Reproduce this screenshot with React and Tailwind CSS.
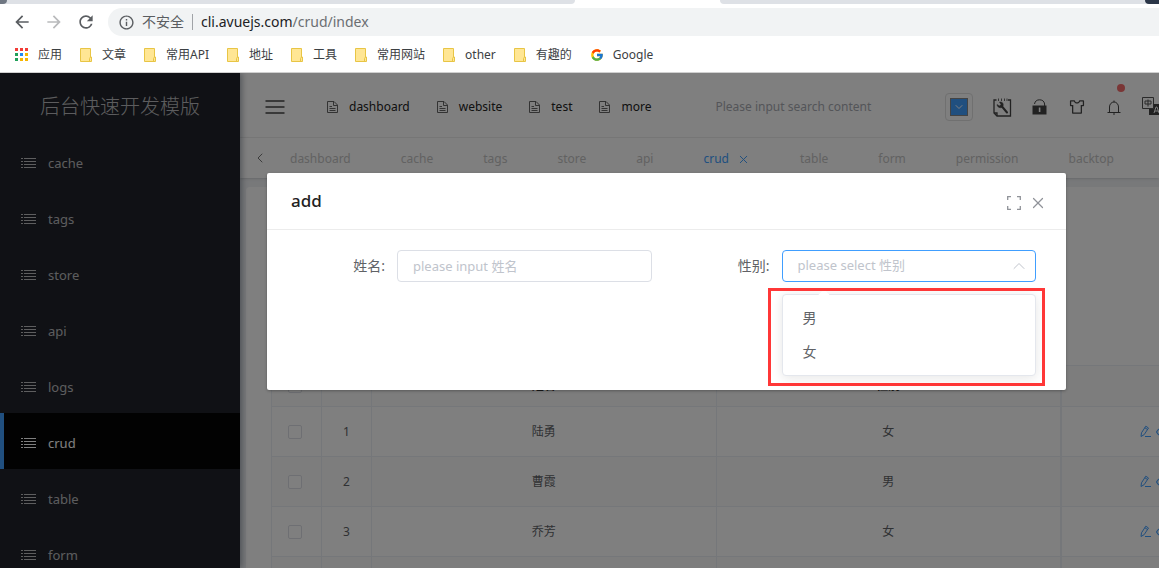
import React from 'react';
import { MdArrowBack, MdArrowForward, MdRefresh, MdInfoOutline } from 'react-icons/md';
import { FcGoogle } from 'react-icons/fc';
import { AiOutlineSkin } from 'react-icons/ai';
import { ChevronLeft, ChevronUp, X } from 'lucide-react';

const bookmarks = ['文章', '常用API', '地址', '工具', '常用网站', 'other', '有趣的'];
const menus = ['cache', 'tags', 'store', 'api', 'logs', 'crud', 'table', 'form'];
const topMenus = ['dashboard', 'website', 'test', 'more'];
const tags = ['dashboard', 'cache', 'tags', 'store', 'api', 'crud', 'table', 'form', 'permission', 'backtop'];
const rows = [
  { id: 1, name: '陆勇', sex: '女' },
  { id: 2, name: '曹霞', sex: '男' },
  { id: 3, name: '乔芳', sex: '女' },
];
const appDots = ['#f23c36', '#f23c36', '#f23c36', '#20a05a', '#2189f5', '#f7b500', '#20a05a', '#f7b500', '#f7b500'];

/* ---------- icons ---------- */

function AppsIcon() {
  return (
    <svg width="14" height="14" viewBox="0 0 14 14" className="shrink-0">
      {appDots.map((fill, i) => (
        <rect key={i} x={(i % 3) * 5} y={Math.floor(i / 3) * 5} width="3" height="3" fill={fill} />
      ))}
    </svg>
  );
}

function FolderIcon() {
  return (
    <svg width="13" height="14" viewBox="0 0 13 14" className="shrink-0">
      <path d="M.5.5h10v8.500h1v4.500H.5z" fill="#ffe694" stroke="#e8c545" />
      <path d="M9.500 13.500v-3l1-1.500" fill="none" stroke="#e8c545" />
    </svg>
  );
}

function ListIcon() {
  return (
    <svg width="16" height="11" viewBox="0 0 16 11" fill="none" stroke="currentColor" className="shrink-0">
      <path d="M0 .5h2M0 3.500h2M0 6.500h2M0 9.500h2M3 .5h12M3 3.500h12M3 6.500h12M3 9.500h12" />
    </svg>
  );
}

function HamburgerIcon() {
  return (
    <svg width="20" height="14" viewBox="0 0 20 14" stroke="#444" strokeWidth="1.600">
      <path d="M.5 1h19M.5 7h19M.5 13h19" />
    </svg>
  );
}

function DocIcon() {
  return (
    <svg width="11" height="13" viewBox="0 0 11 13" fill="none" stroke="#666" className="shrink-0">
      <path d="M.5 .5h6.500l3.500 3.500v7.500H.5zM6.500 .5v4h4M2.500 5.500h2.500M2.500 7.500h6M2.500 9.500h6" />
    </svg>
  );
}

function ToolIcon() {
  return (
    <svg width="19" height="19" viewBox="0 0 19 19" fill="none" stroke="#444" strokeWidth="1.300">
      <path d="M3.500 2H1v13l3 3h13.500V2H15" />
      <path d="M5.500 .5v2.500M8.500 .5v2.500M11.500 .5v2.500M14 .5v2.500" strokeWidth=".8" />
      <path d="M9 8.500l5 6" strokeWidth="2" strokeLinecap="round" />
      <path d="M4 6.500l2.500 1.500 1.500-1.500-1.500-2.500c2.500-.5 4.200 1.200 3.700 3.500s-2.700 2.600-4.200 1.900-2-1.900-2-2.900z" fill="#444" strokeWidth=".5" />
      <path d="M1 15h3v3" />
    </svg>
  );
}

function LockIcon() {
  return (
    <svg width="15" height="16" viewBox="0 0 15 16">
      <path d="M2.500 5C3 2 5 .8 7.500 .8S12.300 2 12.600 5v2" fill="none" stroke="#444" />
      <path d="M.5 6.500h14v9H.5z" fill="#444" />
      <path d="M6.800 8.500h1.600v4.500H6.800z" fill="#fff" />
    </svg>
  );
}

function BellIcon() {
  return (
    <svg width="14" height="15" viewBox="0 0 14 15" fill="none" stroke="#444" strokeWidth="1">
      <path d="M.5 12.500h13M2.500 12.500V7a4.500 5 0 0 1 9 0v5.500M7 .5V2M6 14h2" />
    </svg>
  );
}

function LangIcon() {
  return (
    <svg width="24" height="20" viewBox="0 0 24 20" className="shrink-0">
      <path d="M7 7h16v11H7z" fill="#444" />
      <path d="M.5 .5h11v11H.5z" fill="#fff" stroke="#555" />
      <path d="M3 4h6v3H3zM6 2.500v7" fill="none" stroke="#555" />
      <path d="M12 16l2-6h1l2 6M13 14h3" fill="none" stroke="#fff" />
    </svg>
  );
}

function EditIcon() {
  return (
    <svg width="12" height="13" viewBox="0 0 12 13" fill="none" stroke="#409eff" className="shrink-0">
      <path d="M1 11.500l.5-3.700L5.800 1.200l2.700 1.800-4.300 6.600zM4.800 2.700l2.700 1.800M5 11.500h6" />
    </svg>
  );
}

function EyeIcon() {
  return (
    <svg width="12" height="10" viewBox="0 0 12 10" fill="none" stroke="#409eff" strokeWidth="1.200" className="shrink-0">
      <path d="M.6 5c2.500-5 8.300-5 10.800 0-2.500 5-8.300 5-10.800 0z" />
      <circle cx="6" cy="5" r="1.500" />
    </svg>
  );
}

function FullscreenIcon() {
  return (
    <svg width="14" height="14" viewBox="0 0 14 14" fill="none" stroke="currentColor" strokeWidth="1.300">
      <path d="M.7 4V.7H4M10 .7h3.300V4M13.300 10v3.300H10M4 13.300H.7V10" />
    </svg>
  );
}

/* ---------- browser ---------- */

function BrowserBar() {
  return (
    <header className="shrink-0 bg-white border-b border-[#d0d0d0]">
      {/* Bottom edge of the tab strip */}
      <div className="flex h-1 bg-white">
        <div className="flex w-[575px] bg-[#dee1e6] rounded-br">
          <div className="w-[7px] h-1 bg-[#6f7782] rounded-br" />
        </div>
        <div className="w-[145px]" />
        <div className="flex flex-1 justify-end bg-[#dee1e6] rounded-bl">
          <div className="w-[14px] h-1 bg-[#2b3648] rounded-bl" />
        </div>
      </div>

      <div className="flex items-center pt-1 pl-3 text-[#5a5d61]">
        <button aria-label="back" className="w-8"><MdArrowBack size={20} /></button>
        <button aria-label="forward" className="w-8 text-[#b9babc]"><MdArrowForward size={20} /></button>
        <button aria-label="reload" className="w-8"><MdRefresh size={20} /></button>
        <div className="flex flex-1 items-center h-7 pl-[10px] bg-[#f1f3f4] rounded-l-full text-sm">
          <MdInfoOutline size={17} />
          <span className="ml-[7px]">不安全</span>
          <span className="w-px h-4 mx-2 bg-[#a0a3a7]" />
          <span className="text-[#202124]">cli.avuejs.com<span className="text-[#6b6e72]">/crud/index</span></span>
        </div>
      </div>

      <nav className="flex items-center h-9 pl-[15px] pt-px text-xs text-[#3c4043]">
        <a href="#apps" className="flex items-center gap-[9px] mr-[18px]"><AppsIcon />应用</a>
        {bookmarks.map((name) => (
          <a key={name} href="#folder" className="flex items-center gap-[9px] mr-[18px]"><FolderIcon />{name}</a>
        ))}
        <a href="#google" className="flex items-center gap-[9px]"><FcGoogle size={14} />Google</a>
      </nav>
    </header>
  );
}

/* ---------- admin layout ---------- */

function Sidebar() {
  return (
    <aside className="w-60 shrink-0 bg-[#20222a] text-white/70 shadow-[2px_0_6px_rgba(0,21,41,0.35)]">
      <div className="flex items-center justify-center h-[60px] pt-2 text-xl font-light">后台快速开发模版</div>
      <nav>
        {menus.map((name) => (
          <a
            key={name}
            href={`#${name}`}
            className={`flex items-center gap-[11px] h-14 pt-[5px] text-[13px] border-l-4 pl-[17px] ${
              name === 'crud' ? 'bg-[#050505] border-[#409eff] text-white' : 'border-transparent'
            }`}
          >
            <ListIcon />
            {name}
          </a>
        ))}
      </nav>
    </aside>
  );
}

function TopBar() {
  return (
    <div className="flex items-center h-[65px] shrink-0 pl-[25px] pt-1 bg-white border-b border-[#f0f0f0] overflow-hidden text-xs text-[#222]">
      <button aria-label="toggle menu"><HamburgerIcon /></button>
      <nav className="flex items-center gap-[27px] ml-[42px]">
        {topMenus.map((name) => (
          <a key={name} href={`#${name}`} className="flex items-center gap-[11px]"><DocIcon />{name}</a>
        ))}
      </nav>
      <input
        type="text"
        aria-label="search"
        placeholder="Please input search content"
        className="flex-1 min-w-0 ml-16 bg-transparent outline-none placeholder:text-[#a8abb2]"
      />
      <div className="flex items-center shrink-0">
        <button aria-label="theme color" className="flex items-center justify-center size-7 rounded border border-[#e0e0e0]">
          <span className="flex items-center justify-center size-[18px] border border-[#888] bg-[#409eff] text-white">
            <ChevronUp size={12} strokeWidth={2} className="rotate-180" />
          </span>
        </button>
        <button aria-label="tools" className="ml-5"><ToolIcon /></button>
        <button aria-label="lock" className="ml-5"><LockIcon /></button>
        <button aria-label="skin" className="ml-[21px] text-[#444]"><AiOutlineSkin size={18} /></button>
        <button aria-label="messages" className="relative ml-[21px]">
          <BellIcon />
          <span className="absolute -top-4 left-[10px] size-2 rounded-full bg-[#f56c6c]" />
        </button>
        <button aria-label="language" className="w-[17px] ml-[21px]"><LangIcon /></button>
      </div>
    </div>
  );
}

function TagBar() {
  return (
    <div className="flex items-center shrink-0 h-10 pl-3 bg-white overflow-hidden text-xs text-[#c4c4c4] shadow-sm">
      <ChevronLeft size={16} strokeWidth={1.2} className="shrink-0 text-[#555]" />
      <nav className="flex gap-[50px] pl-[22px] pt-[2px]">
        {tags.map((name) => (
          <a
            key={name}
            href={`#${name}`}
            className={name === 'crud' ? 'flex items-center gap-[8px] text-[#409eff]' : ''}
          >
            {name}
            {name === 'crud' && <X size={13} strokeWidth={1.8} />}
          </a>
        ))}
      </nav>
    </div>
  );
}

function CheckBox({ label }) {
  return (
    <input
      type="checkbox"
      aria-label={label}
      className="appearance-none block size-[14px] ml-4 rounded-xs border border-[#dcdfe6] bg-white"
    />
  );
}

function CrudTable() {
  return (
    <table className="w-full table-fixed border-collapse border-l border-t border-[#ebeef5] text-xs text-center text-[#606266]">
      <colgroup>
        <col className="w-[50px]" />
        <col className="w-[50px]" />
        <col />
        <col />
        <col className="w-[98px]" />
      </colgroup>
      <thead>
        <tr className="h-[41px] bg-[#fafafa] text-black/80 border-b border-[#ebeef5]">
          <th><CheckBox label="select all" /></th>
          <th className="border-x border-[#ebeef5]">#</th>
          <th className="border-r border-[#ebeef5]">姓名</th>
          <th>性别</th>
          <th className="border-l-2 border-[#ebeef5]" />
        </tr>
      </thead>
      <tbody>
        {rows.map((row) => (
          <tr key={row.id} className="h-[50px] border-b border-[#ebeef5] even:bg-[#fafafa]">
            <td><CheckBox label={`select ${row.name}`} /></td>
            <td className="border-x border-[#ebeef5]">{row.id}</td>
            <td className="border-r border-[#ebeef5]">{row.name}</td>
            <td>{row.sex}</td>
            <td className="border-l-2 border-[#ebeef5] overflow-hidden">
              <div className="flex items-center gap-1 pl-[78px]"><EditIcon /><EyeIcon /></div>
            </td>
          </tr>
        ))}
        <tr className="h-[50px] bg-[#fafafa]">
          <td />
          <td className="border-x border-[#ebeef5]" />
          <td className="border-r border-[#ebeef5]" />
          <td />
          <td className="border-l-2 border-[#ebeef5]" />
        </tr>
      </tbody>
    </table>
  );
}

/* ---------- add dialog ---------- */

function AddDialog() {
  return (
    <section role="dialog" aria-label="add" className="flex-1 bg-white rounded-xs shadow-[0_1px_3px_rgba(0,0,0,0.3)]">
      <div className="flex items-center h-[57px] pl-6 pr-[19px] border-b border-[#ececec]">
        <h2 className="flex-1 text-[17px] font-medium text-[#222]">add</h2>
        <div className="flex items-center gap-2 pt-[3px] text-[#909399]">
          <button aria-label="fullscreen"><FullscreenIcon /></button>
          <button aria-label="close"><X size={18} strokeWidth={1.6} /></button>
        </div>
      </div>

      <form className="grid grid-cols-2 min-h-[160px] pt-5 pl-5 pr-[10px] items-start text-[13px] text-[#606266]">
        <div className="flex items-center pr-5">
          <label htmlFor="name" className="w-[110px] pr-3 text-right text-sm">姓名:</label>
          <input
            id="name"
            type="text"
            placeholder="please input 姓名"
            className="flex-1 min-w-0 h-8 px-[15px] rounded border border-[#dcdfe6] outline-none placeholder:text-[#c0c4cc]"
          />
        </div>
        <div className="flex items-center pr-5">
          <label htmlFor="sex" className="w-[110px] pr-3 text-right text-sm">性别:</label>
          <div className="relative flex-1">
            <select
              id="sex"
              defaultValue=""
              className="appearance-none block w-full h-8 px-[15px] rounded border border-[#409eff] bg-white text-[#c0c4cc] outline-none"
            >
              <option value="">please select 性别</option>
              <option>男</option>
              <option>女</option>
            </select>
            <ChevronUp size={20} strokeWidth={1.2} className="absolute right-[7px] top-[6px] text-[#c0c4cc] pointer-events-none" />

            {/* Opened options */}
            <ul className="absolute top-11 inset-x-0 py-[6px] rounded border border-[#e4e7ed] bg-white shadow-[0_2px_12px_rgba(0,0,0,0.1)] text-sm">
              <li aria-hidden="true" className="absolute -top-1 left-[37px] size-2 rotate-45 bg-white" />
              <li className="h-[34px] px-5 leading-[34px]">男</li>
              <li className="h-[34px] px-5 leading-[34px]">女</li>
            </ul>
            {/* Highlight frame */}
            <div className="absolute top-[38px] -left-[14px] -right-[9px] h-[98px] border-[3px] border-[#ff3737] pointer-events-none" />
          </div>
        </div>
      </form>
    </section>
  );
}

export default function App() {
  return (
    <div className="flex flex-col h-screen overflow-hidden font-['Noto_Sans','Noto_Sans_CJK_SC',sans-serif]">
      <BrowserBar />
      <div className="relative flex flex-1 min-h-0 overflow-hidden">
        <Sidebar />
        <main className="flex flex-col flex-1 min-w-0 -z-10 bg-[#f0f2f5]">
          <TopBar />
          <TagBar />
          <div className="flex-1 mt-[9px] ml-[6px] pl-[25px] pt-[178px] bg-white rounded-tl overflow-hidden">
            <CrudTable />
          </div>
        </main>
        <div className="absolute inset-0 flex items-start pt-[100px] pl-[267px] pr-[93px] bg-black/50">
          <AddDialog />
        </div>
      </div>
    </div>
  );
}
